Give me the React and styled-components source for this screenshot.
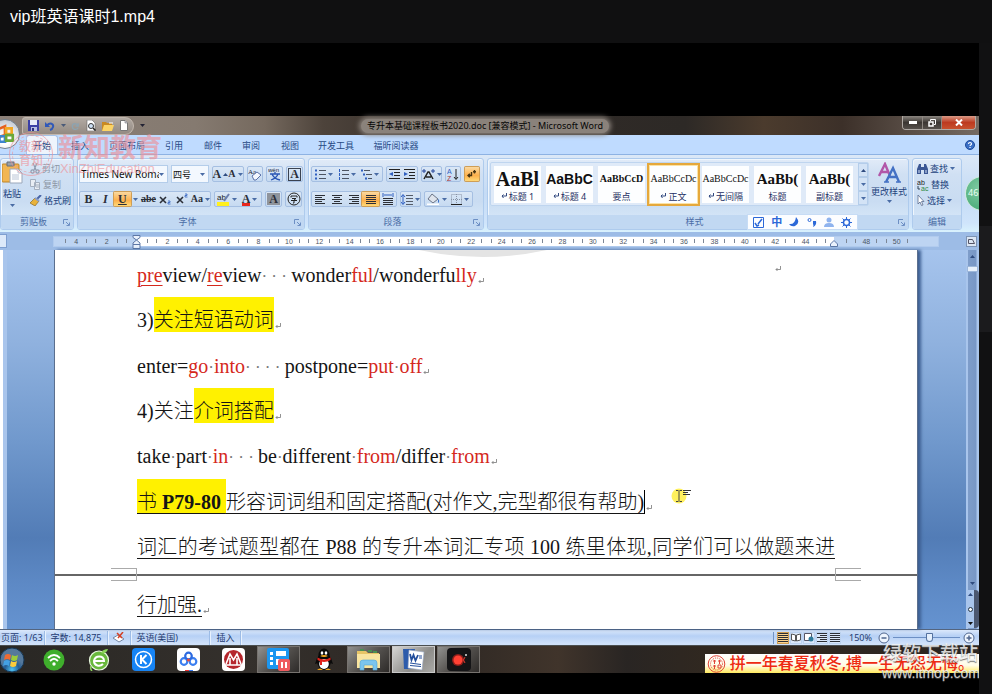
import React from "react";
import styled, { createGlobalStyle, css } from "styled-components";

const UI = `"Noto Sans", "Noto Sans CJK SC", sans-serif`;
const SERIF = `"Liberation Serif", "Noto Sans CJK SC", serif`;

const Global = createGlobalStyle`
  * { box-sizing: border-box; }
  body { margin: 0; background: #000; font-family: ${UI}; font-size: 9px; color: #22427c; }
  button, select { font: inherit; color: inherit; border: 0; background: none; padding: 0; margin: 0; }
  svg { display: block; flex: none; }
`;

/* ---------- player shell ---------- */
const Player = styled.div`
  min-height: 100vh; display: flex; flex-direction: column; overflow: hidden;
`;
const PlayerHeader = styled.header`
  height: 43px; flex: none; padding: 0 10px; background: #101011;
`;
const FileName = styled.h1`
  margin: 0; font-family: "Liberation Sans", "Noto Sans CJK SC", sans-serif; font-size: 16px; line-height: 34px; font-weight: 400; color: #fff;
`;
const PlayerBody = styled.div`flex: 1; display: flex;`;
const Stage = styled.main`flex: 1; min-width: 0; padding-top: 73px; overflow: hidden;`;
const Rail = styled.aside`flex: none; width: 13px; background: #111112; padding-top: 183px;`;
const RailThumb = styled.div`height: 106px; background: #1b1b1d;`;
const Screen = styled.div`position: relative;`;

/* ---------- title bar ---------- */
const TitleBar = styled.div`
  height: 19px; display: flex; align-items: center; padding-left: 22px;
  background: linear-gradient(90deg, #8b8078 0, #857a70 20%, #75695e 27%, #4d433b 33%, #332c28 45%, #2d2926 70%, #4b3b2d 78%, #3c3029 86%, #756a62 100%);
`;
const QuickBar = styled.div`
  width: 112px; height: 18px; padding: 0 5px; display: flex; align-items: center; justify-content: space-between;
  border: 1px solid #c2b8af; border-radius: 3px 9px 9px 3px; background: linear-gradient(#b2aaa3, #938a82);
`;
const PlainButton = styled.button`display: flex; align-items: center; justify-content: center;`;
const QuickMore = styled(PlainButton)`margin-left: 4px; width: 8px;`;
const WindowTitle = styled.div`
  flex: 1; display: flex; justify-content: center; padding-right: 78px; line-height: 18px; color: #050505; white-space: nowrap;
`;
const TitleGlow = styled.span`
  padding: 0 6px; border-radius: 9px; line-height: 14px; background: #8a827b; box-shadow: 0 0 5px 2px #8a827b;
`;
const WindowButtons = styled.div`
  display: flex; align-self: flex-start; height: 14px; margin-right: 3px;
  border: 1px solid #b0aaa5; border-top: 0; border-radius: 0 0 4px 4px; overflow: hidden;
`;
const WindowButton = styled(PlainButton)`
  width: ${(p) => (p.$close ? 34 : 19)}px;
  background: ${(p) => (p.$close ? "linear-gradient(#d99a86, #bd3a20 50%, #c8512e)" : "linear-gradient(#8c8781, #3c3733 50%, #56504b)")};
  border-left: ${(p) => (p.$first ? 0 : "1px solid #8e8882")};
`;
const OfficeButton = styled.button`
  position: absolute; left: -10px; top: 3px; width: 30px; height: 30px; border-radius: 50%; z-index: 2;
  display: flex; align-items: center; justify-content: center; border: 1px solid #73808e;
  background: radial-gradient(circle at 50% 70%, #fff 20%, #e4e6ea 50%, #aeb7c2);
`;

/* ---------- ribbon ---------- */
const Tabs = styled.nav`
  height: 19px; padding: 0 4px 0 26px; display: flex; align-items: stretch; background: #bfdbff;
`;
const TabList = styled.div`
  display: grid; grid-template-columns: 32px 44px 50px 44px 34px 42px 36px 56px 64px; justify-items: center;
`;
const Tab = styled.button`
  padding: 0 4px; line-height: 19px; color: #274a85; white-space: nowrap;
  ${(p) => p.$on && css`background: #eef4fc; border: 1px solid #a7c3e8; border-bottom: 0; border-radius: 3px 3px 0 0; padding: 0 6px;`}
`;
const HelpButton = styled(PlainButton)`margin-left: auto;`;
const Ribbon = styled.section`
  position: relative; height: 78px; padding: 3px 17px 2px 0; display: flex; gap: 3px; overflow: hidden;
  background: linear-gradient(#dbe8f7, #c5dbf5 50%, #cfe4fb 88%, #d9f2fd); border-top: 1px solid #8db2e3;
`;
const Group = styled.div`
  display: flex; flex-direction: column; justify-content: space-between;
  width: ${(p) => (p.$w ? `${p.$w}px` : "auto")}; flex: ${(p) => (p.$w ? "none" : 1)};
  border: 1px solid #aecbed; border-radius: 3px; overflow: hidden;
  background: linear-gradient(#e1ebf8, #d0e0f3 22%, #c9dcf2 60%, #dcecfb);
  box-shadow: inset 1px 1px 0 #eff6fd;
`;
const GroupBody = styled.div`
  flex: 1; display: flex; flex-direction: ${(p) => (p.$col ? "column" : "row")};
  padding: ${(p) => p.$pad || "4px 2px 0"}; gap: ${(p) => p.$gap || 0}px;
`;
const GroupFoot = styled.div`
  height: 14px; display: flex; align-items: center; padding: 0 3px; background: #c1d8f2; color: #4a6ca5;
`;
const GroupName = styled.span`flex: 1; text-align: center; line-height: 14px;`;
const PasteButton = styled.button`
  width: 22px; display: flex; flex-direction: column; align-items: center; gap: 3px; line-height: 14px; white-space: nowrap;
`;
const SideList = styled.div`display: flex; flex-direction: column; gap: 1px;`;
const SideButton = styled.button`
  height: 15px; display: flex; align-items: center; gap: 2px; line-height: 15px; white-space: nowrap;
  color: ${(p) => (p.$dim ? "#8d97a6" : "#22427c")};
`;
const ToolRow = styled.div`display: flex; height: ${(p) => p.$h || 18}px; align-items: center; gap: ${(p) => p.$gap || 3}px;`;
const ToolSet = styled.div`
  height: 16px; display: flex; align-items: stretch; width: ${(p) => p.$w}px; justify-content: space-around;
  border: 1px solid #a5bfe2; border-radius: 2px; background: linear-gradient(#dae7f6, #c6daf1);
`;
const Tool = styled.button`
  flex: 1; display: flex; align-items: center; justify-content: center; gap: 2px;
  ${(p) => p.$on && css`background: linear-gradient(#fbd9a0, #fdb04c 60%, #ffd977); box-shadow: 0 0 0 1px #cf9e55; border-radius: 1px;`}
`;
const Glyph = styled.span`
  font-family: "Liberation Serif", serif; font-size: ${(p) => p.$size || 12}px; line-height: 14px; color: #2b2f38;
  font-weight: 700;
  font-style: ${(p) => (p.$italic ? "italic" : "normal")};
  text-decoration: ${(p) => p.$deco || "none"};
  ${(p) => p.$bar && css`box-shadow: inset 0 -3px 0 ${p.$bar};`}
  ${(p) => p.$box && css`border: 1px solid #3a4250; line-height: 11px; padding: 0 1px;`}
  ${(p) => p.$fill && css`background: #8f949c; line-height: 12px; padding: 0 2px;`}
`;
const ComboWrap = styled.label`
  position: relative; width: ${(p) => p.$w}px; height: 18px; display: flex; align-items: center;
  background: #f3f8fe; border: 1px solid #b4cdea; padding-right: 3px;
`;
const Combo = styled.select`
  flex: 1; min-width: 0; height: 16px; appearance: none; padding-left: 1px; font-size: ${(p) => p.$size}px; color: #111; outline: 0;
`;
const Gallery = styled.div`
  height: 44px; display: flex; align-items: center; gap: 5px; padding: 0 0 0 3px; background: #dfeaf8;
  border: 1px solid #bfd5ef; border-radius: 2px;
`;
const StyleTile = styled.button`
  width: 47px; height: 37px; overflow: hidden; background: #fdfeff; display: flex; flex-direction: column; justify-content: space-between;
  ${(p) => p.$on && css`box-shadow: 0 0 0 1px #fbe2a5, 0 0 0 3px #e5a83c;`}
`;
const Sample = styled.span`
  align-self: stretch; height: 24px; line-height: 26px; text-align: center; white-space: nowrap; overflow: hidden; color: #111;
  font-family: ${(p) => (p.$sans ? `"Liberation Sans", sans-serif` : `"Liberation Serif", serif`)};
  font-size: ${(p) => p.$size}px; font-weight: ${(p) => (p.$light ? 400 : 700)};
`;
const TileName = styled.span`
  align-self: center; display: flex; align-items: center; gap: 2px; line-height: 13px; color: #1e2f63; white-space: nowrap;
`;
const GalleryScroll = styled.div`width: 10px; height: 42px; display: flex; flex-direction: column; background: #d3e3f6;`;
const ScrollStep = styled(PlainButton)`flex: 1; border: 1px solid #b4cdea;`;
const ChangeStyles = styled(PasteButton)`flex: 1; min-width: 40px; gap: 1px;`;
const ImeBar = styled.div`
  position: absolute; right: 121px; bottom: 2px; width: 111px; height: 16px; padding: 0 5px;
  display: flex; align-items: center; justify-content: space-between; background: #fcfdff; border: 1px solid #c7dcf5;
`;
const ImeMode = styled.button`color: #2c68d8; font-size: 11px; font-weight: 700; line-height: 14px;`;
const CountBadge = styled.div`
  position: absolute; right: -21px; top: 21px; width: 35px; height: 35px; border-radius: 50%; padding-left: 2px;
  background: radial-gradient(circle at 40% 35%, #7fcba3, #4fae7c 70%); border: 1px solid #d4ece1;
  color: #eafff3; line-height: 32px;
`;

/* ---------- ruler and document ---------- */
const RulerBar = styled.div`
  height: 18px; display: flex; align-items: center; background: #9dbce6; padding-right: 2px;
`;
const TabStop = styled(PlainButton)`width: 7px; height: 14px; margin-right: 47px; background: #dce9f9; border: 1px solid #7e9fd0; border-left: 0;`;
const Ruler = styled.div`
  position: relative; flex: 1; height: 9px; display: flex; padding: 0 26px 0 7px;
  background: linear-gradient(90deg, #bdd4f2 83px, #fff 83px, #fff calc(100% - 104px), #bdd4f2 calc(100% - 104px));
  box-shadow: 0 0 0 1px #b1cbee;
`;
const RulerCell = styled.span`
  flex: 1; min-width: 0; display: grid; grid-template-columns: 1px 12px 1px; justify-content: space-evenly; align-items: center; text-align: center;
  font-size: 7px; line-height: 9px; color: #4d5665; justify-items: center;
  font-family: "Liberation Sans", sans-serif;
`;
const Tick = styled.i`width: 1px; height: 4px; background: #7c8695;`;
const RulerToggle = styled(PlainButton)`margin-left: 28px; width: 11px; height: 11px; background: #dbe6f4; border: 1px solid #7d94b5;`;
const Hourglass = styled.svg`position: absolute; left: 78px; top: -2px;`;
const IndentEnd = styled.svg`position: absolute; right: 100px; top: 3px;`;

const Work = styled.div`display: flex; align-items: stretch;`;
const SideRuler = styled.div`flex: none; width: 7px; background: linear-gradient(90deg, #fff 3px, #a9c5ec 3px);`;
const Canvas = styled.div`
  flex: 1; min-width: 0; padding: 0 48px 0 47px;
  background: linear-gradient(#a6c4ed, #8fb1de 25%, #7199cd 50%, #527cb6 76%, #5d89c5 88%, #6593d0);
`;
const Page = styled.article`
  position: relative; background: #fff; border: 1px solid #5b6f8e; border-width: 0 1px; color: #151515; box-shadow: 3px 0 3px #3d5f92;
  font-family: ${SERIF}; font-size: 20px; line-height: 45px;
`;
const Sheet = styled.section`
  position: relative; padding: ${(p) => (p.$last ? "7px 82px 1px" : "3px 82px 4px")};
`;
const Line = styled.p`
  margin: 0; height: 45px; white-space: nowrap; font-weight: 300;
  &:nth-of-type(3n) { margin-top: 1px; }
  ${(p) => p.$full && css`text-align: justify; text-align-last: justify;`}
`;
const Red = styled.span`
  color: #d5281c; ${(p) => p.$under && css`text-decoration: underline; text-underline-offset: 3px; text-decoration-thickness: 1px;`}
`;
const Under = styled.span`text-decoration: underline; text-underline-offset: 4px; text-decoration-thickness: 1px;`;
const Mark = styled.mark`background: #fff100; color: inherit; padding: 12px 0 1px;`;
const Strong = styled.b`font-weight: 700;`;
const Dots = styled.span`color: #777; white-space: pre; font-size: 17px; line-height: 20px;`;
const Caret = styled.i`display: inline-block; width: 1px; height: 24px; margin-bottom: -5px; background: #000;`;
const Return = styled.svg`display: inline-block; vertical-align: -2px; margin-left: 1px;`;
const PageBreak = styled.div`position: relative; height: 2px; background: #666;`;
const Corner = styled.i`
  position: absolute; top: -6px; width: 26px; height: 13px; border: 1px solid #aaa;
  ${(p) => (p.$right ? "right: 56px; border-right: 0;" : "left: 56px; border-left: 0;")}
`;
const StrayReturn = styled.span`position: absolute; left: 719px; top: -7px; line-height: 40px;`;
const Pointer = styled.svg`position: absolute; left: 616px; top: 237px;`;
const Arc = styled.svg`position: absolute; left: 364px; top: 0;`;
const ScrollBar = styled.div`
  flex: none; width: 13px; padding: 5px 1px 1px; display: flex; flex-direction: column; align-items: center; gap: 5px;
  background: linear-gradient(90deg, #a9c5ec 2px, #7e9dca 2px, #7897c6 10px, #a9c5ec 11px);
`;
const Thumb = styled.div`width: 11px; height: 6px; margin-top: 3px; background: #e7f0fb; border: 1px solid #9db7da;`;
const Spacer = styled.div`flex: 1;`;
const PageJump = styled.div`
  width: 12px; height: 38px; display: flex; flex-direction: column; justify-content: space-between; align-items: center; padding: 3px 0; background: #a9c5ec;
  border-right: 5px solid #4c5870; border-radius: 0 4px 4px 0;
`;

/* ---------- status bar ---------- */
const StatusBar = styled.footer`
  height: 16px; display: flex; align-items: center; color: #1f3b70; white-space: nowrap;
  background: linear-gradient(#dbe8fb, #b6d0f5 40%, #cfe1fa 90%); border-top: 1px solid #54657f;
`;
const StatusItem = styled.div`
  height: 14px; line-height: 14px; min-width: ${(p) => p.$min || 0}px; padding: 0 ${(p) => p.$pad || 6}px;
  border-right: 1px solid #9dbce6; box-shadow: 1px 0 0 #e8f2fe; display: flex; align-items: center;
`;
const ViewSet = styled.div`margin-left: auto; padding-left: 3px; border-left: 1px solid #7293c4; display: flex; gap: 1px;`;
const ViewButton = styled(PlainButton)`
  width: 12px; height: 12px; border: 1px solid ${(p) => (p.$on ? "#cf9e55" : "#bcd2ef")}; background: ${(p) => (p.$on ? "#fcd38e" : "#dbe8fa")};
`;
const Zoom = styled.div`display: flex; align-items: center; gap: 3px; padding: 0 4px 0 8px;`;
const ZoomLabel = styled.label`padding-right: 3px;`;
const ZoomTrack = styled.input`
  appearance: none; width: 67px; height: 11px; margin: 0; background: linear-gradient(transparent 5px, #6c8fc4 5px, #6c8fc4 6px, transparent 6px);
  &::-webkit-slider-thumb { appearance: none; width: 7px; height: 9px; background: #e4effc; border: 1px solid #54719f; border-radius: 1px 1px 4px 4px; }
`;

/* ---------- taskbar ---------- */
const TaskBar = styled.div`
  height: 28px; display: flex; align-items: stretch; border-top: 1px solid #4b4f50;
  background: linear-gradient(90deg, #292724, #34302c 25%, #2d2723 45%, #40342b 57%, #292523 64%, #33291f 75%, #2a2421);
`;
const TaskItem = styled.button`
  width: 45px; display: flex; align-items: center; justify-content: center; flex: none;
  ${(p) => p.$start && css`width: 24px; margin-right: 7px;`}
  ${(p) => p.$open && css`
    width: 43px; margin: 0 1px; border: 1px solid ${p.$open === "strong" ? "#c9c9c9" : "#77736f"};
    background: ${p.$open === "strong" ? "linear-gradient(135deg, #d6d6d4, #8d8c89 60%, #aaa9a6)" : "linear-gradient(135deg, #91918f, #55524f 50%, #2e2b29)"};
  `}
`;
const Banner = styled.div`
  margin-left: auto; align-self: flex-end; height: 19px; padding: 0 5px 0 2px; display: flex; align-items: center; gap: 4px; white-space: nowrap;
  font-size: 16px; line-height: 19px; font-weight: 500; color: #ee2a12; background: linear-gradient(#fff, #fffbe6 60%, #ffe95e);
`;
const Credit = styled.div`
  position: absolute; right: 0; top: 526px; width: 97px; z-index: 3; text-align: center; color: #f2f2f2; opacity: 0.85; text-shadow: 0 1px 1px #555;
  font-size: 19px; line-height: 23px; font-weight: 500; white-space: nowrap;
`;
const CreditUrl = styled.a`display: block; color: inherit; text-decoration: none; font: 14px/16px "Liberation Sans", sans-serif;`;

const SealMark = styled.div`
  position: absolute; left: 9px; top: 16px; z-index: 3; display: flex; align-items: center; gap: 5px; color: #ee8f96; opacity: 0.62; pointer-events: none;
`;
const SealRing = styled.div`
  width: 44px; height: 44px; border-radius: 50%; border: 1px solid #ee8f96; outline: 1px dashed #ee8f96; outline-offset: -4px;
  font-size: 12px; line-height: 14px; font-weight: 500; text-align: center; padding-top: 7px;
`;
const SealTitle = styled.div`font-size: 26px; line-height: 30px; font-weight: 700; white-space: nowrap;`;
const SealSub = styled.div`font: 13px/14px "Liberation Sans", sans-serif; padding-left: 2px;`;

/* ---------- small drawings ---------- */
const Down = ({ c = "#4a6ca5" }) => <svg width="5" height="3" viewBox="0 0 5 3"><path d="M0 0h5L2.5 3z" fill={c} /></svg>;
const Up = () => <svg width="5" height="3" viewBox="0 0 5 3"><path d="M0 3h5L2.5 0z" fill="#2f4c80" /></svg>;
const Launcher = () => <svg width="7" height="7" viewBox="0 0 7 7" fill="none" stroke="#6d8fc4"><path d="M.5 5V.5H5M3 3l3 3M6.500 3.500v3h-3" /></svg>;
const Ret = () => <Return width="6" height="6" viewBox="0 0 6 6" fill="none" stroke="#777" strokeWidth=".8"><path d="M5.500 0v3.500H1M2.500 2L1 3.500 2.500 5" /></Return>;
const RetDark = () => <svg width="6" height="6" viewBox="0 0 6 6" fill="none" stroke="#334a80"><path d="M5.500 0v3H1M2.500 1.500L1 3l1.500 2" /></svg>;

const SaveIcon = () => <svg width="11" height="11" viewBox="0 0 11 11"><path d="M0 0h11v11H0z" fill="#3b3fa5" /><path d="M2 0h7v5H2z" fill="#e6eaf8" /><path d="M3 7h6v4H3z" fill="#b7bfe3" /><path d="M4 8h2v3H4z" fill="#2c2f80" /></svg>;
const UndoIcon = () => <svg width="10" height="10" viewBox="0 0 10 10" fill="none" stroke="#3159b8" strokeWidth="2"><path d="M2 4.500C5 1 9 3 8 6c-.4 1.500-1.500 2.500-3 3" /><path d="M0 1v5h5z" fill="#3159b8" stroke="none" /></svg>;
const RedoIcon = () => <svg width="9" height="10" viewBox="0 0 10 10" fill="none" stroke="#8da3b0" strokeWidth="1.500"><path d="M8 2v3H5M8 5C6 1 1 2 1.500 6S7 9 8 7" /></svg>;
const PreviewIcon = () => <svg width="10" height="11" viewBox="0 0 10 11"><path d="M1 0h5l3 3v8H1z" fill="#fff" stroke="#666" strokeWidth=".6" /><circle cx="5" cy="6" r="2.500" fill="#cfe2f7" stroke="#333" /><path d="M7 8l2.500 2.500" stroke="#222" strokeWidth="1.500" /></svg>;
const OpenIcon = () => <svg width="12" height="10" viewBox="0 0 12 10"><path d="M0 1h4l1 1h5v8H0z" fill="#c98a22" /><path d="M2 4h10l-2 6H0z" fill="#fbd365" /><path d="M7 2h4" stroke="#fff" /></svg>;
const NewIcon = () => <svg width="8" height="11" viewBox="0 0 8 11"><path d="M.5.5H5L7.500 3v7.500h-7z" fill="#fff" stroke="#777" /><path d="M5 .5V3h2.500" fill="#ccd" stroke="#777" strokeWidth=".6" /></svg>;
const OfficeLogo = () => <svg width="20" height="20" viewBox="0 0 18 18" fill="none" strokeWidth="2.400"><path d="M2 5l7-3v8l-7 2z" stroke="#e4601f" /><path d="M10 4h5v5h-5z" stroke="#f3a822" /><path d="M4 11h5v5H4z" stroke="#3b84cf" /><path d="M10 10h6v5h-6z" stroke="#6aa83a" /></svg>;
const PasteIcon = () => <svg width="21" height="23" viewBox="0 0 21 23"><rect x="0" y="3" width="17" height="18" rx="1" fill="#f2b653" stroke="#bd8427" /><path d="M5 1h7v4H5z" fill="#9aa0a8" stroke="#666f7a" /><path d="M8 8h8l4 4v10H8z" fill="#fff" stroke="#9aa7ba" /><path d="M16 8v4h4M10 14h7M10 16h7M10 18h7" stroke="#a8b6cb" fill="none" strokeWidth=".8" /></svg>;
const CutIcon = () => <svg width="10" height="11" viewBox="0 0 10 11" fill="none" stroke="#8f9caf" strokeWidth="1.200"><path d="M3 0l3 7M7 0L4 7" /><circle cx="2.500" cy="8.500" r="1.600" /><circle cx="7.500" cy="8.500" r="1.600" /></svg>;
const CopyIcon = () => <svg width="11" height="11" viewBox="0 0 11 11" fill="#e8edf4" stroke="#a4afbf"><path d="M.5.500h5v7h-5zM4.500 3.500h5v7h-5z" /><path d="M6 6h3M6 8h3" /></svg>;
const BrushIcon = () => <svg width="12" height="11" viewBox="0 0 12 11"><path d="M11 0L6 5" stroke="#4965a8" strokeWidth="2" /><path d="M5 3l4 3-4 5-5-3z" fill="#e8b23b" stroke="#7a5a18" strokeWidth=".6" /><path d="M5 3l4 3" stroke="#8d9dc4" strokeWidth="2" /></svg>;
const EraserIcon = () => <svg width="14" height="13" viewBox="0 0 14 13"><text x="0" y="6" fontSize="7" fontFamily="Liberation Serif" fill="#223">Aa</text><path d="M4 8l5-4 4 3-5 5H6z" fill="#f4f7fd" stroke="#5a70a8" /></svg>;
const PhoneticIcon = () => <svg width="14" height="14" viewBox="0 0 14 14"><text x="0" y="5" fontSize="6" fontFamily="Liberation Sans" fill="#223">wén</text><path d="M2 7h10M7 5v2M10 7c-1 3-4 5-7 6M4 7c1 3 4 5 8 6" stroke="#2b55b4" strokeWidth="1.300" fill="none" /></svg>;
const CircleCharIcon = () => <svg width="14" height="14" viewBox="0 0 14 14" fill="none" stroke="#222"><circle cx="7" cy="7" r="6" /><path d="M4 5.500V4h6v1.500M5 6.500h4L7 8v3H6M4 8.500h6" /></svg>;
const HighlightIcon = () => <svg width="13" height="13" viewBox="0 0 13 13"><text x="0" y="7" fontSize="8" fontFamily="Liberation Sans" fill="#222">ab</text><path d="M12 1L7 8" stroke="#6a7fae" strokeWidth="2" /><path d="M0 9h12v4H0z" fill="#fff01f" /></svg>;
const ScriptIcon = ({ up }) => <svg width="12" height="12" viewBox="0 0 12 12"><path d="M1 4l6 6M7 4l-6 6" stroke="#2b2f38" strokeWidth="1.600" /><path d={up ? "M9 1h2v1.500H9V4h2.500" : "M9 8h2v1.500H9V11h2.500"} stroke="#2f5fc0" strokeWidth=".8" fill="none" /></svg>;

const ListIcon = ({ kind }) => (
  <svg width="11" height="11" viewBox="0 0 11 11" strokeWidth="1">
    <path d={kind === "multi" ? "M3 1.500h6M5 5.500h6M7 9.500h4" : "M4 1.500h7M4 5.500h7M4 9.500h7"} stroke="#4c5462" />
    <path d={kind === "multi" ? "M0 1.500h2M2 5.500h2M4 9.500h2" : kind === "num" ? "M1.500 0v3M1.500 4v3M1.500 8v3" : "M0 1.500h2M0 5.500h2M0 9.500h2"} stroke="#2f5fc0" strokeWidth={kind === "num" ? 1 : 2} />
  </svg>
);
const IndentIcon = ({ right }) => (
  <svg width="11" height="10" viewBox="0 0 11 10"><path d="M0 .5h11M5 3.500h6M5 6.500h6M0 9.500h11" stroke="#222" /><path d={right ? "M0 3l4 2-4 2z" : "M4 3L0 5l4 2z"} fill="#2f5fc0" /></svg>
);
const AlignIcon = ({ kind = "full" }) => {
  const d = { left: "M0 .5h10M0 2.500h7M0 4.500h10M0 6.500h7M0 8.500h10", center: "M0 .5h10M2 2.500h6M0 4.500h10M2 6.500h6M0 8.500h10", right: "M0 .5h10M3 2.500h7M0 4.500h10M3 6.500h7M0 8.500h10", full: "M0 .5h10M0 2.500h10M0 4.500h10M0 6.500h10M0 8.500h10" };
  return <svg width="10" height="9" viewBox="0 0 10 9"><path d={d[kind]} stroke="#2c2f36" /></svg>;
};
const SpreadIcon = () => <svg width="12" height="12" viewBox="0 0 12 12"><path d="M1 0v4M11 0v4M2 2h8" stroke="#2f5fc0" /><path d="M1 5.500h10M1 7.500h10M1 9.500h10M1 11.500h10" stroke="#2c2f36" /></svg>;
const ScaleIcon = () => <svg width="13" height="11" viewBox="0 0 13 11"><path d="M2 10l4-7h1l4 7M4 8h5" fill="none" stroke="#222" strokeWidth="1.500" /><path d="M0 2h4M9 2h4M2 0v4M11 0v4" stroke="#24459a" /></svg>;
const SortIcon = () => <svg width="12" height="13" viewBox="0 0 12 13"><text x="0" y="6" fontSize="7" fontFamily="Liberation Sans" fill="#2f5fc0">A</text><text x="0" y="13" fontSize="7" fontFamily="Liberation Sans" fill="#a33">Z</text><path d="M9 1v10M7 9l2 2.500L11 9" stroke="#222" fill="none" /></svg>;
const ShowMarksIcon = () => <svg width="10" height="10" viewBox="0 0 10 10" fill="none" stroke="#4a3512" strokeWidth="1.400"><path d="M7.500 1v3.500M9 2.700H6M4.500 3v3.500H1M2.800 4.700L1 6.500l1.800 1.800" /></svg>;
const SpacingIcon = () => <svg width="12" height="11" viewBox="0 0 12 11"><path d="M5 1.500h7M5 4.500h7M5 7.500h7M5 10.500h7" stroke="#555c68" /><path d="M2 1v9M0 3l2-2.500L4 3M0 8l2 2.500L4 8" stroke="#2f5fc0" fill="none" /></svg>;
const BucketIcon = () => <svg width="13" height="12" viewBox="0 0 13 12"><path d="M5 1l6 5-5 4-5-4z" fill="#dfe4ec" stroke="#6b7486" /><path d="M11 6c2 1 1 4 0 4z" fill="#3d72c9" /><path d="M0 11.500h12" stroke="#fff" strokeWidth="2" /></svg>;
const BorderIcon = () => <svg width="11" height="11" viewBox="0 0 11 11" fill="none" stroke="#8893a5" strokeDasharray="1 1"><path d="M.5.5h10v10H.5zM5.500 0v11M0 5.500h11" /><path d="M0 10.500h11" stroke="#222" strokeDasharray="none" /></svg>;
const StylesIcon = () => <svg width="23" height="22" viewBox="0 0 23 22" fill="none" strokeWidth="2.400"><path d="M1 14L7 2l5 12M3 10h7" stroke="#b257a8" /><path d="M8 20l7-14 6 14M10 15h9" stroke="#4471c4" /><path d="M6 20h5M18 20h5" stroke="#4471c4" strokeWidth="1.500" /></svg>;
const FindIcon = () => <svg width="11" height="10" viewBox="0 0 11 10" fill="#3b5794"><path d="M2 0h2v3h3V0h2l2 5v5H7V6H4v4H0V5z" /><path d="M1.500 6h1v3h-1zM8.500 6h1v3h-1z" fill="#d6e4f7" /></svg>;
const ReplaceIcon = () => <svg width="12" height="12" viewBox="0 0 12 12"><text x="0" y="6" fontSize="7" fontFamily="Liberation Sans" fill="#222">ab</text><text x="4" y="12" fontSize="7" fontFamily="Liberation Sans" fill="#2d8a3d">ac</text><path d="M1 7v3h2" stroke="#345" fill="none" /></svg>;
const SelectIcon = () => <svg width="8" height="11" viewBox="0 0 8 11"><path d="M1 0v9l2-2 1.500 3.500L6 10 4.500 6.500H7z" fill="#fff" stroke="#5a6c8e" strokeWidth=".8" /></svg>;
const HelpIcon = () => <svg width="10" height="10" viewBox="0 0 10 10"><circle cx="5" cy="5" r="4.500" fill="#3a6fc6" stroke="#1f4c9b" /><path d="M3.500 4c0-2 3-2 3 0 0 1-1.500 1-1.500 2M5 7v1" stroke="#fff" strokeWidth="1.200" fill="none" /></svg>;

const WifiIcon = () => <svg width="22" height="22" viewBox="0 0 22 22"><circle cx="11" cy="11" r="10.500" fill="#3fae2c" /><path d="M5 9c4-4 8-4 12 0M7 12c3-3 5-3 8 0" stroke="#fff" strokeWidth="1.800" fill="none" /><circle cx="11" cy="15" r="1.700" fill="#fff" /></svg>;
const BrowserIcon = () => <svg width="22" height="22" viewBox="0 0 22 22"><circle cx="11" cy="11.500" r="9.500" fill="#69b83c" stroke="#e8f7df" strokeWidth="1.200" /><path d="M6 12h10c0-6-9-6-10 0 0 5 6 6 9 3" stroke="#fff" strokeWidth="2" fill="none" /><path d="M13 4c1-3 4-4 7-4-1 3-3 5-7 4z" fill="#8bd25a" /><path d="M3 17q-1 3 1 5" stroke="#8bd25a" strokeWidth="1.500" fill="none" /></svg>;
const KIcon = () => <svg width="23" height="23" viewBox="0 0 23 23"><rect width="23" height="23" rx="4" fill="#1684f5" /><circle cx="11.500" cy="11.500" r="8" fill="none" stroke="#fff" strokeWidth="1.500" /><path d="M9 7v9M14.500 7L10 11.500l4.500 4.500" stroke="#fff" strokeWidth="2" fill="none" /></svg>;
const CloudIcon = () => <svg width="23" height="23" viewBox="0 0 23 23"><rect width="23" height="23" rx="4" fill="#fff" /><g fill="none" strokeWidth="2.200"><circle cx="7" cy="13.500" r="3.300" stroke="#3a7ef0" /><circle cx="16" cy="13.500" r="3.300" stroke="#3a7ef0" /><circle cx="11.500" cy="8" r="3.300" stroke="#2b69e0" /></g><circle cx="11.500" cy="12" r="1.600" fill="#e64a3b" /><path d="M8 22.500h4" stroke="#e33" /><path d="M12 22.500h4" stroke="#37e" /></svg>;
const BankIcon = () => <svg width="23" height="23" viewBox="0 0 23 23"><rect width="23" height="23" rx="4" fill="#fff" /><circle cx="11.500" cy="11.500" r="9.500" fill="#b5262c" /><path d="M4 16l4-10 3.500 6L15 6l4 10M8 10v7M15 10v7" stroke="#fff" strokeWidth="1.600" fill="none" /><path d="M3 17h17" stroke="#fff" strokeWidth="1.500" /></svg>;
const RecorderIcon = () => <svg width="23" height="23" viewBox="0 0 23 23"><rect width="22" height="21" rx="2" fill="#1b96f0" /><path d="M3 4h3v3H3zM3 9h3v3H3zM3 14h3v3H3zM9 3h10v5H9zM9 11h5v6H9z" fill="#fff" /><rect x="11" y="11" width="12" height="12" rx="2" fill="#ef5b5f" /><path d="M15 14v6M19 14v6" stroke="#fff" strokeWidth="2" /></svg>;
const PenguinIcon = () => <svg width="18" height="23" viewBox="0 0 18 23"><ellipse cx="9" cy="13" rx="7" ry="9" fill="#0a0a0a" /><path d="M2 10l-2 6 3-1M16 10l2 6-3-1" fill="#0a0a0a" /><ellipse cx="9" cy="7" rx="5.500" ry="6.500" fill="#0a0a0a" /><ellipse cx="9" cy="16" rx="4.800" ry="5" fill="#fff" /><ellipse cx="7" cy="5" rx="1.300" ry="1.800" fill="#fff" /><ellipse cx="11" cy="5" rx="1.300" ry="1.800" fill="#fff" /><path d="M5 8q4 2 8 0-4-2-8 0z" fill="#f6a81c" /><path d="M2.500 9.500q6.500 4 13 0v2.500q-6.500 4-13 0zM5 13h2v4H5z" fill="#e2231a" /><path d="M2 22q3-3 6 0zM10 22q3-3 6 0z" fill="#f6a81c" /></svg>;
const FolderIcon = () => <svg width="25" height="23" viewBox="0 0 25 23"><path d="M1 3h9l2 2h11v15H1z" fill="#e7c566" /><path d="M4 2h4M12 3h4M17 4h4" stroke="#4a8f52" strokeWidth="2" /><path d="M1 6h23v14H1z" fill="#f9e5a0" /><path d="M4 22v-7q0-3 3-3h11q3 0 3 3v7h-4v-5H8v5z" fill="#7cc5ee" stroke="#4fa4d8" strokeWidth=".6" /></svg>;
const WordIcon = () => <svg width="23" height="23" viewBox="0 0 23 23"><path d="M1 1h12L9 21H2z" fill="#2e5cab" /><path d="M7 2l15 2-2 18-14-2z" fill="#fff" stroke="#98a8c4" strokeWidth=".6" /><path d="M8 6l1.500 6 2-5 2 5.500L16 7" stroke="#244f9d" strokeWidth="1.800" fill="none" /><path d="M17 8h3M17 10h3M8 15l11 1.500M8 17.500l11 1" stroke="#244f9d" /></svg>;
const RecIcon = () => <svg width="24" height="23" viewBox="0 0 24 23"><rect width="24" height="23" rx="4" fill="#141416" /><circle cx="11" cy="12" r="6" fill="#8d1f1b" /><circle cx="11" cy="12" r="4.500" fill="#ff4134" /><path d="M18 9q-3 3 0 6" stroke="#e23a30" fill="none" /><circle cx="19" cy="7" r="1" fill="#ddd" /></svg>;
const StartIcon = () => <svg width="26" height="26" viewBox="0 0 26 26"><defs><radialGradient id="orb" cx=".5" cy=".9"><stop offset="0" stopColor="#4fc3f2" /><stop offset=".6" stopColor="#235e96" /><stop offset="1" stopColor="#55789b" /></radialGradient></defs><circle cx="13" cy="13" r="12" fill="url(#orb)" stroke="#163857" /><path d="M6 8q3-2 6 0l-1 5q-3-2-6 0z" fill="#ee6a32" /><path d="M13 8q3 2 6 0l-1 5q-3 2-6 0z" fill="#9ccb3a" /><path d="M5 14q3-2 6 0l-1 5q-3-2-6 0z" fill="#43a1e4" /><path d="M12 14q3 2 6 0l-1 5q-3 2-6 0z" fill="#fbcb3c" /></svg>;
const SealIcon = () => <svg width="19" height="18" viewBox="0 0 19 18" fill="none" stroke="#e04438"><circle cx="9.500" cy="9" r="8.300" /><circle cx="9.500" cy="9" r="6" strokeDasharray="1 1" /><path d="M6 6h3M7.500 5v4M11 6h3M12.500 5v4M6 11h3M7.500 10v4M11 10h3v3h-3z" /></svg>;

const Arrow = styled.span`display: flex; align-items: center; padding: 0 2px;`;
const DropTool = ({ label, children, on }) => (
  <Tool type="button" aria-label={label} $on={on}>{children}<Down /></Tool>
);

const tiles = [
  { name: "标题 1", text: "AaBl", size: 20, ret: true },
  { name: "标题 4", text: "AaBbC", size: 14, sans: true, ret: true },
  { name: "要点", text: "AaBbCcD", size: 10 },
  { name: "正文", text: "AaBbCcDc", size: 10, light: true, ret: true, on: true },
  { name: "无间隔", text: "AaBbCcDc", size: 10, light: true, ret: true },
  { name: "标题", text: "AaBb(", size: 15 },
  { name: "副标题", text: "AaBb(", size: 15 },
];
const ruler = ["4", "2", "", ...Array.from({ length: 22 }, (_, i) => String(i * 2 + 2)), "", "48", "50"];
const tabs = ["开始", "插入", "页面布局", "引用", "邮件", "审阅", "视图", "开发工具", "福昕阅读器"];

function RibbonBar() {
  return (
    <Ribbon>
      <Group $w={74}>
        <GroupBody $pad="2px 0 0" $gap={7}>
          <PasteButton type="button"><PasteIcon />粘贴<Down /></PasteButton>
          <SideList>
            <SideButton type="button" $dim><CutIcon />剪切</SideButton>
            <SideButton type="button" $dim><CopyIcon />复制</SideButton>
            <SideButton type="button"><BrushIcon />格式刷</SideButton>
          </SideList>
        </GroupBody>
        <GroupFoot><GroupName>剪贴板</GroupName><Launcher /></GroupFoot>
      </Group>

      <Group $w={228}>
        <GroupBody $col $gap={8} $pad="6px 1px 0">
          <ToolRow>
            <ComboWrap $w={89}>
              <Combo $size={10} aria-label="字体名称"><option>Times New Romar</option></Combo><Down />
            </ComboWrap>
            <ComboWrap $w={38}>
              <Combo $size={9} aria-label="字号"><option>四号</option></Combo><Down />
            </ComboWrap>
            <ToolSet $w={32}>
              <Tool type="button"><Glyph>A</Glyph><Up /></Tool>
              <Tool type="button"><Glyph $size={10}>A</Glyph><Down /></Tool>
            </ToolSet>
            <ToolSet $w={17}><Tool type="button" aria-label="清除格式"><EraserIcon /></Tool></ToolSet>
            <ToolSet $w={17}><Tool type="button" aria-label="拼音指南"><PhoneticIcon /></Tool></ToolSet>
            <ToolSet $w={17}><Tool type="button"><Glyph $box>A</Glyph></Tool></ToolSet>
          </ToolRow>
          <ToolRow $h={16}>
            <ToolSet $w={132}>
              <Tool type="button"><Glyph>B</Glyph></Tool>
              <Tool type="button"><Glyph $italic>I</Glyph></Tool>
              <Tool type="button" $on><Glyph $deco="underline">U</Glyph></Tool>
              <Arrow><Down /></Arrow>
              <Tool type="button"><Glyph $size={10} $deco="line-through">abe</Glyph></Tool>
              <Tool type="button" aria-label="下标"><ScriptIcon /></Tool>
              <Tool type="button" aria-label="上标"><ScriptIcon up /></Tool>
              <DropTool><Glyph $size={10}>Aa</Glyph></DropTool>
            </ToolSet>
            <ToolSet $w={48}>
              <DropTool label="突出显示"><HighlightIcon /></DropTool>
              <DropTool><Glyph $bar="#e8261c">A</Glyph></DropTool>
            </ToolSet>
            <ToolSet $w={17}><Tool type="button"><Glyph $fill>A</Glyph></Tool></ToolSet>
            <ToolSet $w={17}><Tool type="button" aria-label="带圈字符"><CircleCharIcon /></Tool></ToolSet>
          </ToolRow>
        </GroupBody>
        <GroupFoot><GroupName>字体</GroupName><Launcher /></GroupFoot>
      </Group>

      <Group $w={176}>
        <GroupBody $col $gap={8} $pad="6px 2px 0">
          <ToolRow>
            <ToolSet $w={72}>
              <DropTool label="项目符号"><ListIcon /></DropTool>
              <DropTool label="编号"><ListIcon kind="num" /></DropTool>
              <DropTool label="多级列表"><ListIcon kind="multi" /></DropTool>
            </ToolSet>
            <ToolSet $w={32}>
              <Tool type="button" aria-label="减少缩进"><IndentIcon /></Tool>
              <Tool type="button" aria-label="增加缩进"><IndentIcon right /></Tool>
            </ToolSet>
            <ToolSet $w={21}><DropTool label="中文版式"><ScaleIcon /></DropTool></ToolSet>
            <ToolSet $w={16}><Tool type="button" aria-label="排序"><SortIcon /></Tool></ToolSet>
            <ToolSet $w={16}><Tool type="button" aria-label="显示标记" $on><ShowMarksIcon /></Tool></ToolSet>
          </ToolRow>
          <ToolRow $h={16}>
            <ToolSet $w={86}>
              <Tool type="button" aria-label="左对齐"><AlignIcon kind="left" /></Tool>
              <Tool type="button" aria-label="居中"><AlignIcon kind="center" /></Tool>
              <Tool type="button" aria-label="右对齐"><AlignIcon kind="right" /></Tool>
              <Tool type="button" aria-label="两端对齐" $on><AlignIcon /></Tool>
              <Tool type="button" aria-label="分散对齐"><SpreadIcon /></Tool>
            </ToolSet>
            <ToolSet $w={21}><DropTool label="行距"><SpacingIcon /></DropTool></ToolSet>
            <ToolSet $w={49}>
              <DropTool label="底纹"><BucketIcon /></DropTool>
              <DropTool label="边框"><BorderIcon /></DropTool>
            </ToolSet>
          </ToolRow>
        </GroupBody>
        <GroupFoot><GroupName>段落</GroupName><Launcher /></GroupFoot>
      </Group>

      <Group>
        <GroupBody $pad="3px 0 0 2px">
          <Gallery>
            {tiles.map((t) => (
              <StyleTile type="button" key={t.name} $on={t.on}>
                <Sample $size={t.size} $sans={t.sans} $light={t.light}>{t.text}</Sample>
                <TileName>{t.ret && <RetDark />}{t.name}</TileName>
              </StyleTile>
            ))}
            <GalleryScroll>
              <ScrollStep type="button" aria-label="上一行"><Up /></ScrollStep>
              <ScrollStep type="button" aria-label="下一行"><Down /></ScrollStep>
              <ScrollStep type="button" aria-label="更多"><Down /></ScrollStep>
            </GalleryScroll>
          </Gallery>
          <ChangeStyles type="button"><StylesIcon />更改样式<Down /></ChangeStyles>
        </GroupBody>
        <GroupFoot><GroupName>样式</GroupName><Launcher /></GroupFoot>
      </Group>

      <Group $w={50}>
        <GroupBody $pad="2px 4px 0">
          <SideList>
            <SideButton type="button"><FindIcon />查找 <Down /></SideButton>
            <SideButton type="button"><ReplaceIcon />替换</SideButton>
            <SideButton type="button"><SelectIcon />选择 <Down /></SideButton>
          </SideList>
        </GroupBody>
        <GroupFoot><GroupName>编辑</GroupName></GroupFoot>
      </Group>

      <ImeBar>
        <svg width="11" height="11" viewBox="0 0 11 11" fill="none" stroke="#2c68d8"><path d="M.5.5h10v10H.5z" /><path d="M9 2L5 7M2 6l2 3 2-1" strokeWidth="1.500" /></svg>
        <ImeMode type="button">中</ImeMode>
        <svg width="10" height="10" viewBox="0 0 10 10"><path d="M7 0q5 6-1 9-4 1-6-2 6 1 7-7z" fill="#2c68d8" /></svg>
        <svg width="10" height="10" viewBox="0 0 10 10"><circle cx="2.500" cy="3" r="1.500" fill="none" stroke="#2c68d8" /><path d="M6 4h3q1 4-3 6 1-2 0-3z" fill="#2c68d8" /></svg>
        <svg width="10" height="10" viewBox="0 0 10 10" fill="#8fb3ee"><circle cx="5" cy="3" r="2.500" /><path d="M0 10q0-4 5-4t5 4z" /></svg>
        <svg width="11" height="11" viewBox="0 0 11 11" fill="none" stroke="#2c68d8"><circle cx="5.500" cy="5.500" r="3" strokeWidth="1.500" /><path d="M5.500 0v2M5.500 9v2M0 5.500h2M9 5.500h2M1.500 1.500L3 3M8 8l1.500 1.500M9.500 1.500L8 3M3 8L1.500 9.500" /></svg>
      </ImeBar>
      <CountBadge>46</CountBadge>
    </Ribbon>
  );
}

function Document() {
  return (
    <Work>
      <SideRuler />
      <Canvas>
        <Page>
          <Sheet>
            <Arc width="128" height="7" viewBox="0 0 128 7"><path d="M0 0h128Q64 14 0 0z" fill="#e4e4e4" /></Arc>
            <StrayReturn><Ret /></StrayReturn>
            <Line><Red $under>pre</Red>view/<Red $under>re</Red>view<Dots>· · · </Dots>wonder<Red>ful</Red>/wonderfu<Red>lly</Red><Ret /></Line>
            <Line>3)<Mark>关注短语动词</Mark><Ret /></Line>
            <Line>enter=<Red>go<Dots>·</Dots>into</Red><Dots>· · · · </Dots>postpone=<Red>put<Dots>·</Dots>off</Red><Ret /></Line>
            <Line>4)关注<Mark>介词搭配</Mark><Ret /></Line>
            <Line>take<Dots>·</Dots>part<Dots>·</Dots><Red>in</Red><Dots>· · · </Dots>be<Dots>·</Dots>different<Dots>·</Dots><Red>from</Red>/differ<Dots>·</Dots><Red>from</Red><Ret /></Line>
            <Line><Under><Mark>书<Strong> P79-80 </Strong></Mark>形容词词组和固定搭配(对作文,完型都很有帮助)</Under><Caret /><Ret /></Line>
            <Line $full><Under>词汇的考试题型都在 P88 的专升本词汇专项 100 练里体现,同学们可以做题来进</Under></Line>
            <Pointer width="22" height="18" viewBox="0 0 22 18"><circle cx="8" cy="9" r="7.500" fill="#fff05e" /><path d="M5 3.500h2.500M8.500 3.500H11M8 4v10M5 14.500h2.500M8.500 14.500H11" stroke="#444" /><path d="M12 3.500h8M12 5.500h5M12 7.500h7" stroke="#333" /></Pointer>
          </Sheet>
          <PageBreak><Corner /><Corner $right /></PageBreak>
          <Sheet $last><Line><Under>行加强.</Under><Ret /></Line></Sheet>
        </Page>
      </Canvas>
      <ScrollBar>
        <Up /><Thumb /><Spacer /><Down c="#2f4c80" />
        <PageJump><Up /><svg width="5" height="5" viewBox="0 0 5 5"><circle cx="2.500" cy="2.500" r="2" fill="#fff" stroke="#234" /></svg><Down c="#111" /></PageJump>
      </ScrollBar>
    </Work>
  );
}

export default function App() {
  return (
    <Player>
      <Global />
      <PlayerHeader><FileName>vip班英语课时1.mp4</FileName></PlayerHeader>
      <PlayerBody>
        <Stage>
          <Screen>
            <OfficeButton type="button" aria-label="Office"><OfficeLogo /></OfficeButton>
            <SealMark>
              <SealRing>敎新<br />育知</SealRing>
              <div><SealTitle>新知教育</SealTitle><SealSub>XinZhiEducation</SealSub></div>
            </SealMark>
            <TitleBar>
              <QuickBar>
                <PlainButton type="button" aria-label="保存"><SaveIcon /></PlainButton>
                <PlainButton type="button" aria-label="撤消"><UndoIcon /></PlainButton>
                <Down c="#4a5a78" />
                <PlainButton type="button" aria-label="重复"><RedoIcon /></PlainButton>
                <PlainButton type="button" aria-label="打印预览"><PreviewIcon /></PlainButton>
                <PlainButton type="button" aria-label="打开"><OpenIcon /></PlainButton>
                <PlainButton type="button" aria-label="新建"><NewIcon /></PlainButton>
              </QuickBar>
              <QuickMore type="button" aria-label="自定义"><Down c="#223" /></QuickMore>
              <WindowTitle><TitleGlow>专升本基础课程板书2020.doc [兼容模式] - Microsoft Word</TitleGlow></WindowTitle>
              <WindowButtons>
                <WindowButton type="button" aria-label="最小化" $first><svg width="8" height="3"><path d="M0 1.500h8" stroke="#fff" strokeWidth="3" /></svg></WindowButton>
                <WindowButton type="button" aria-label="还原"><svg width="8" height="8" viewBox="0 0 8 8" fill="none" stroke="#fff"><path d="M2.500 2V.5h5v5H6" /><path d="M1 3h4v4H1z" strokeWidth="1.500" /></svg></WindowButton>
                <WindowButton type="button" aria-label="关闭" $close><svg width="8" height="7" viewBox="0 0 8 7"><path d="M1 .5l6 6M7 .5l-6 6" stroke="#fff" strokeWidth="2" /></svg></WindowButton>
              </WindowButtons>
            </TitleBar>
            <Tabs>
              <TabList>{tabs.map((n, i) => <Tab type="button" key={n} $on={i === 0}>{n}</Tab>)}</TabList>
              <HelpButton type="button" aria-label="帮助"><HelpIcon /></HelpButton>
            </Tabs>
            <RibbonBar />
            <RulerBar>
              <TabStop type="button" aria-label="制表符" />
              <Ruler>
                {ruler.map((n, i) => <RulerCell key={i}><Tick /><span>{n}</span><Tick /></RulerCell>)}
                <Hourglass width="9" height="14" viewBox="0 0 9 14" fill="#e9f1fc" stroke="#5c77a6"><path d="M1 .5h7v2L4.500 5 1 2.500zM1 9.500V8l3.500-3L8 8v1.500zM1 9.500h7v4H1z" /></Hourglass>
                <IndentEnd width="8" height="7" viewBox="0 0 8 7" fill="#e9f1fc" stroke="#5c77a6"><path d="M.5 6.500V4L4 .5 7.500 4v2.500z" /></IndentEnd>
              </Ruler>
              <RulerToggle type="button" aria-label="标尺"><svg width="7" height="7" viewBox="0 0 7 7" fill="none" stroke="#556"><path d="M.5 1.500h4l2 4h-6z" /></svg></RulerToggle>
            </RulerBar>
            <Document />
            <StatusBar>
              <StatusItem $pad={1}>页面: 1/63</StatusItem>
              <StatusItem>字数: 14,875</StatusItem>
              <StatusItem $pad={5}>
                <svg width="12" height="11" viewBox="0 0 12 11"><path d="M0 6l5-3 6 4-5 3z" fill="#fff" stroke="#7587a5" /><path d="M4 1l5 5M10 0L5 6" stroke="#d43e22" strokeWidth="1.500" /></svg>
              </StatusItem>
              <StatusItem $pad={5} $min={79}>英语(美国)</StatusItem>
              <StatusItem>插入</StatusItem>
              <ViewSet>
                <ViewButton type="button" aria-label="页面视图" $on><AlignIcon /></ViewButton>
                <ViewButton type="button" aria-label="阅读版式"><svg width="10" height="9" viewBox="0 0 10 9" fill="#fff" stroke="#555"><path d="M.5 1l4 1v6l-4-1zM9.500 1l-4 1v6l4-1z" /></svg></ViewButton>
                <ViewButton type="button" aria-label="Web 版式"><svg width="10" height="9" viewBox="0 0 10 9"><path d="M.5.5h7v7h-7z" fill="#fff" stroke="#556" /><circle cx="7" cy="6" r="2.500" fill="#2f7a9a" /></svg></ViewButton>
                <ViewButton type="button" aria-label="大纲视图"><AlignIcon kind="right" /></ViewButton>
                <ViewButton type="button" aria-label="普通视图"><AlignIcon /></ViewButton>
              </ViewSet>
              <Zoom>
                <ZoomLabel htmlFor="zoom">150%</ZoomLabel>
                <svg width="12" height="12" viewBox="0 0 12 12" fill="#eef5fe" stroke="#51678f"><circle cx="6" cy="6" r="5" /><path d="M3.500 6h5" strokeWidth="1.500" /></svg>
                <ZoomTrack id="zoom" type="range" min="10" max="200" defaultValue="115" />
                <svg width="12" height="12" viewBox="0 0 12 12" fill="#eef5fe" stroke="#51678f"><circle cx="6" cy="6" r="5" /><path d="M3.500 6h5M6 3.500v5" strokeWidth="1.500" /></svg>
              </Zoom>
            </StatusBar>
            <TaskBar>
              <TaskItem type="button" aria-label="开始" $start><StartIcon /></TaskItem>
              <TaskItem type="button" aria-label="WiFi"><WifiIcon /></TaskItem>
              <TaskItem type="button" aria-label="浏览器"><BrowserIcon /></TaskItem>
              <TaskItem type="button" aria-label="K"><KIcon /></TaskItem>
              <TaskItem type="button" aria-label="网盘"><CloudIcon /></TaskItem>
              <TaskItem type="button" aria-label="银行"><BankIcon /></TaskItem>
              <TaskItem type="button" aria-label="课件" $open="soft"><RecorderIcon /></TaskItem>
              <TaskItem type="button" aria-label="QQ"><PenguinIcon /></TaskItem>
              <TaskItem type="button" aria-label="文件夹" $open="soft"><FolderIcon /></TaskItem>
              <TaskItem type="button" aria-label="Word" $open="strong"><WordIcon /></TaskItem>
              <TaskItem type="button" aria-label="录屏" $open="soft"><RecIcon /></TaskItem>
              <Banner><SealIcon />拼一年春夏秋冬,搏一生无怨无悔。</Banner>
            </TaskBar>
            <Credit>绿软下载站<CreditUrl href="#">www.itmop.com</CreditUrl></Credit>
          </Screen>
        </Stage>
        <Rail><RailThumb /></Rail>
      </PlayerBody>
    </Player>
  );
}
